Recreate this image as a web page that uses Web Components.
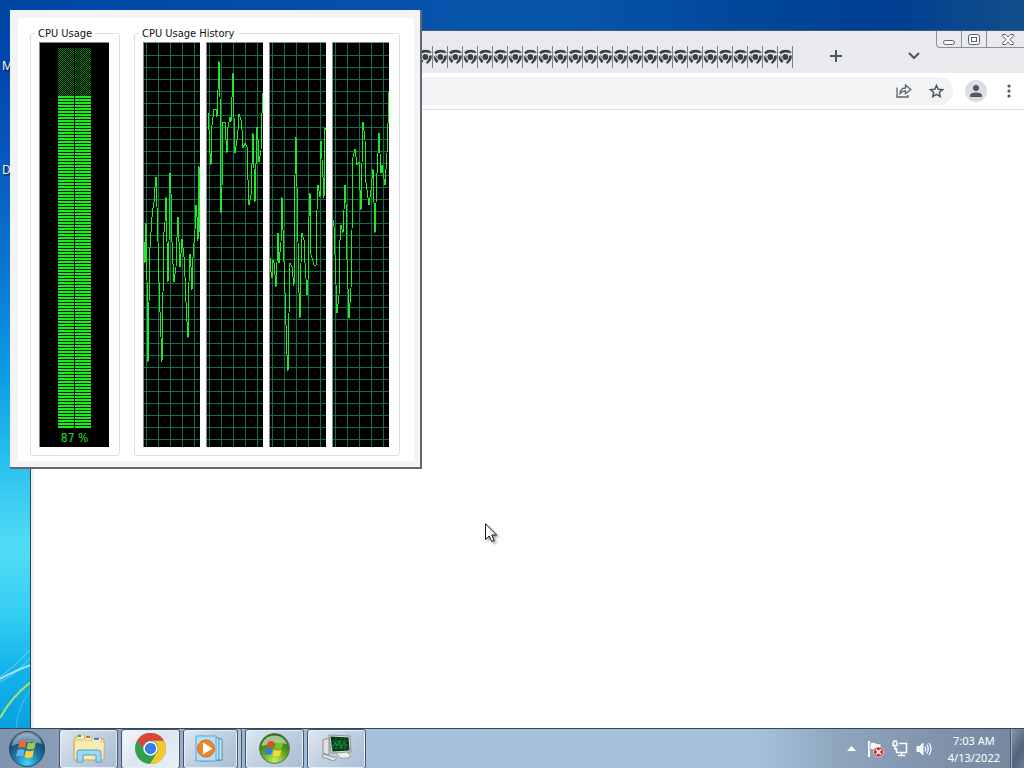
<!DOCTYPE html>
<html lang="en">
<head>
<meta charset="utf-8">
<title>Desktop</title>
<style>
html,body{margin:0;height:100%}
body{font-family:"Noto Sans","Open Sans",sans-serif;overflow:hidden}
</style>
</head>
<body>
<win-desktop>
  <browser-window></browser-window>
  <cpu-monitor></cpu-monitor>
  <win-taskbar slot="bar"></win-taskbar>
</win-desktop>
<script>
function define(name, html, setup) {
  customElements.define(name, class extends HTMLElement {
    constructor() {
      super();
      this.attachShadow({mode: "open"}).innerHTML = html;
      if (setup) setup.call(this, this.shadowRoot);
    }
  });
}

/* Scrolling graph of one processor core */
const HISTORY = [
  "1,200 2,221 3,181 4,238 5,320 6,260 7,205 9,175 10,166 11,160 12,145 13,135 14,165 15,200 16,240 17,270 19,320 20,250 21,190 22,180 23,155 24,200 25,240 26,200 27,131 28,151 29,200 30,222 31,240 33,225 34,195 35,175 36,200 37,225 39,197 41,215 42,235 43,260 44,280 45,296 46,240 47,212 48,225 49,248 50,215 52,188 53,163 54,175 55,199 56,124 57,190",
  "2,71 3,88 4,111 5,123 6,83 7,75 8,67 10,67 11,75 12,48 13,19 14,55 15,171 16,145 17,80 19,80 20,98 21,111 22,85 24,75 25,80 27,31 28,75 29,111 31,98 32,88 33,72 35,78 36,88 37,106 39,101 41,105 42,138 43,163 45,153 47,91 49,160 51,85 52,98 53,120 55,108 56,71 57,51",
  "1,216 2,230 3,236 4,218 5,221 7,245 8,220 9,191 10,221 12,200 13,155 14,188 16,251 18,313 19,329 20,271 21,221 23,225 25,244 26,133 27,95 28,145 29,200 30,251 31,276 32,221 33,191 35,198 36,221 38,253 39,238 40,175 41,151 42,213 44,219 45,223 47,224 48,168 49,143 51,155 52,99 54,135 55,156 56,86 57,88",
  "1,178 2,185 3,213 5,271 7,253 8,198 9,183 11,191 12,168 13,143 14,161 15,218 17,276 19,246 20,188 21,115 23,107 25,123 27,120 28,148 29,168 30,121 31,80 33,98 34,141 37,163 39,148 41,127 42,161 43,191 45,131 47,91 49,131 50,123 51,131 53,143 55,111 56,81 56,50 57,50"
];

define("cpu-graph", `<style>
:host{display:block;width:57px;height:405px;background:#000;overflow:hidden}
svg{display:block;width:100%;height:100%}
</style>
<svg viewBox="0 0 57 405" shape-rendering="crispEdges" fill="none">
<path class="grid" stroke="#117048"/>
<polyline stroke="#1eea26" stroke-width="1"/>
<path d="M.5 405V.5H57" stroke="#878787"/>
</svg>`, function (root) {
  let d = "";
  for (let x = 3; x < 57; x += 12) d += `M${x + .5} 1V405`;
  for (let y = 13; y < 405; y += 12) d += `M1 ${y + .5}H57`;
  root.querySelector(".grid").setAttribute("d", d);
  this.plot = points => root.querySelector("polyline").setAttribute("points", points);
});

define("cpu-meter", `<style>
:host{display:flex;flex-direction:column;align-items:center;box-sizing:border-box;width:70px;height:405px;
  background:#000;border-top:1px solid #878787;border-left:1px solid #878787;padding-top:5px}
.bars{display:grid;grid-template-columns:16px 16px;column-gap:1px;grid-template-rows:48px 332px}
.off{background:conic-gradient(#000 25%,#08780f 0 50%,#000 0 75%,#08780f 0) 0 0/2px 2px}
.on{background:repeating-linear-gradient(#18f01c 0 2px,#021a02 2px 3px)}
output{font:12px/16px "DejaVu Sans Condensed","DejaVu Sans",sans-serif;color:#1fe022;margin-top:2px}
</style>
<div class="bars"><i class="off"></i><i class="off"></i><i class="on"></i><i class="on"></i></div>
<output>87 %</output>`);

define("group-box", `<style>
:host{display:block}
fieldset{box-sizing:border-box;margin:0;min-width:0;border:1px solid #dcdfe2;border-radius:3px;padding:1px 10px 8px 8px}
legend{font:11px/15px "DejaVu Sans Condensed","DejaVu Sans",sans-serif;color:#111;padding:0 3px;margin-left:-4px}
.content{display:flex;gap:6px}
</style>
<fieldset><legend><slot name="title"></slot></legend><div class="content"><slot></slot></div></fieldset>`);

define("cpu-monitor", `<style>
:host{display:block;position:absolute;left:10px;top:10px;box-sizing:border-box;background:#f3f4f7;padding:8px 6px 6px 8px;
 border:solid #66686e;border-width:0 2px 2px 0}
.panel{display:flex;gap:14px;background:#fff;padding:8px 14px 5px 12px;border-radius:2px}
</style>
<div class="panel">
<group-box><span slot="title">CPU Usage</span><cpu-meter></cpu-meter></group-box>
<group-box class="history"><span slot="title">CPU Usage History</span></group-box>
</div>`, function (root) {
  const box = root.querySelector(".history");
  for (const points of HISTORY) {
    const graph = document.createElement("cpu-graph");
    graph.plot(points);
    box.append(graph);
  }
});

define("browser-tab", `<style>
:host{display:block;flex:none;width:15px}
button{display:block;width:15px;height:22px;border:0;border-right:1px solid #7d8288;padding:0;background:none}
svg{display:block;width:14px;height:16px}
</style>
<button aria-label="Tab"><svg viewBox="0 0 14 16" fill="none">
<circle cx="7.300" cy="8" r="2.900" fill="#3c4045"/>
<g stroke="#3c4045" stroke-width="2.700"><path d="M2 4.300Q4.200 2.200 7.500 2.200Q10.800 2.200 12.800 4.200"/><path d="M2.200 6.500Q1.600 10.500 4.700 13"/><path d="M12.300 6.500Q13.200 10.800 8.300 13.800"/></g>
<path d="M7 4.300H13.500M3.800 9.500L1 6M9.500 10.800L6.500 15" stroke="#e8eaed" stroke-width="1"/></svg></button>`);

define("browser-window", `<style>
:host{display:flex;flex-direction:column;position:absolute;inset:30px 0 0 30px;box-sizing:border-box;background:#fff;
 border-top:1px solid #405a78;border-left:1px solid #25455f}
.tabs{display:flex;align-items:center;height:42px;background:#e8eaed;position:relative}
.list{display:flex;margin:9px 23px 0 12px}
button{display:grid;place-items:center;border:0;padding:0;background:none;color:#50555a}
svg{display:block}
.new,.more{width:40px;height:28px;margin-top:8px}
.more{margin-left:auto;margin-right:90px}
.caption{position:absolute;top:0;right:0;display:flex;box-sizing:border-box;height:17px;border:1px solid #8c9095;border-width:0 0 1px 1px;border-radius:0 0 0 4px}
.caption button{width:25px;height:16px;border-right:1px solid #8c9095}
.caption button:last-child{width:37px;border:0;padding-left:4px}
.bar{display:flex;align-items:center;height:36px;border-bottom:1px solid #dcdee1;padding-right:2px}
.omni{flex:1;display:flex;align-items:center;height:28px;background:#f1f3f4;border-radius:14px;margin-left:112px;padding-right:1px}
input{flex:1;min-width:0;border:0;outline:0;background:none;font:13px "Noto Sans",sans-serif}
.omni button{width:32px;height:28px}
.user{width:22px;height:22px;border-radius:50%;background:#dadde4;margin:0 8px 0 12px}
.menu{width:27px;height:28px}
main{flex:1;background:#fff;border-left:3px solid #eef0f2}
</style>
<div class="tabs"><div class="list"></div>
<button class="new" aria-label="New tab"><svg width="12" height="12"><path d="M6 0V12M0 6H12" stroke="currentColor" stroke-width="2"/></svg></button>
<button class="more" aria-label="Search tabs"><svg width="12" height="8" fill="none"><path d="M1 1L6 6L11 1" stroke="currentColor" stroke-width="2"/></svg></button>
<div class="caption">
<button aria-label="Minimize"><svg width="13" height="12" fill="#fff" stroke="#5d6267"><rect x=".5" y="7.500" width="11" height="4" rx="2"/></svg></button>
<button aria-label="Restore"><svg width="12" height="11" fill="#fff" stroke="#5d6267"><rect x=".5" y=".5" width="11" height="10" rx="2"/><rect x="3.500" y="3.500" width="5" height="4"/></svg></button>
<button aria-label="Close"><svg width="12" height="11" fill="#fff" stroke="#5d6267"><path d="M.7 .5H3.800L6 3L8.200 .5H11.300V2L8 5.500L11.300 9V10.500H8.200L6 8L3.800 10.500H.7V9L4 5.500L.7 2Z"/></svg></button>
</div></div>
<div class="bar"><div class="omni"><input aria-label="Address">
<button aria-label="Share"><svg width="16" height="14" fill="none" stroke="#5f6368" stroke-width="1.300"><path d="M1 3.500V13H12V11M4 9.500Q4.500 4.200 9.500 4V1L14.800 5.500L9.500 9.700V7Q6 7 4 9.500Z"/></svg></button>
<button aria-label="Bookmark"><svg width="15" height="14" fill="none" stroke="#50555a" stroke-width="1.500"><path d="M7.500 1.500L9.200 5.300L13.500 5.700L10.300 8.500L11.200 12.600L7.500 10.400L3.800 12.600L4.700 8.500L1.500 5.700L5.800 5.300Z"/></svg></button></div>
<button class="user" aria-label="Profile"><svg width="12" height="12" fill="#50555f"><circle cx="6" cy="3" r="3"/><path d="M0 12V10Q1 7.500 6 7.500T12 10V12Z"/></svg></button>
<button class="menu" aria-label="Menu"><svg width="4" height="14" fill="#50555a"><circle cx="2" cy="2" r="1.600"/><circle cx="2" cy="7" r="1.600"/><circle cx="2" cy="12" r="1.600"/></svg></button></div>
<main></main>`, function (root) {
  const list = root.querySelector(".list");
  for (let i = 0; i < 50; i++) list.append(document.createElement("browser-tab"));
});

define("task-button", `<style>
:host{display:block;width:59px;height:40px}
button{display:grid;place-items:center;box-sizing:border-box;width:100%;height:100%;padding:0 0 2px;border:1px solid #42566e;border-radius:3px;
 background:linear-gradient(135deg,#dfe8f2,#c2d0e2 45%,#a9bdd6);box-shadow:inset 0 0 0 1px #e6eef7}
:host([active]) button{background:linear-gradient(135deg,#f5f8fc,#dbe4ef 50%,#eef2f7)}
:host([stacked]) button{width:55px;padding-right:4px;box-shadow:inset 0 0 0 1px #e6eef7,3px 0 0 #b4c5da,4px 0 0 #42566e}
</style><button><slot></slot></button>`, function (root) {
  root.querySelector("button").setAttribute("aria-label", this.getAttribute("label") || "Program");
});

define("win-taskbar", `<style>
:host{display:flex;align-items:stretch;box-sizing:border-box;height:40px;border-top:1px solid #31465c;
 background:linear-gradient(90deg,#8194ae 0,#8c9fb9 6%,#a7c1dc 36%,#a6c0da 74%,#8fa5be 82%,#7f92aa 92%,#7588a0)}
svg{display:block}
.start{border:0;background:none;padding:0 0 0 8px;margin-right:13px;display:grid;place-items:center}
.apps{display:flex;gap:3px}
.tray{display:flex;align-items:center;gap:8px;margin-left:auto}
.tray button{border:0;background:none;padding:0}
.tray .more{margin-right:3px}
time{display:block;font-size:11px;line-height:17px;color:#fff;text-align:center;margin:0 2px 0 8px}
.peek{align-self:stretch;width:14px;border-left:1px solid #44566b!important;box-shadow:inset 1px 0 #a7b5c6;
 background:linear-gradient(120deg,#8998ab,#52647a 60%,#6c7c92)!important}
</style>
<button class="start" aria-label="Start"><svg width="38" height="38" viewBox="0 0 38 38">
<defs><radialGradient id="o" cx=".5" cy=".9" r=".9"><stop stop-color="#43d8f5"/><stop offset=".4" stop-color="#1a7cac"/><stop offset=".75" stop-color="#1d4a72"/><stop offset="1" stop-color="#89a9c4"/></radialGradient></defs>
<circle cx="19" cy="19" r="17.500" fill="url(#o)" stroke="#26455f"/><path d="M4 14A16 16 0 0 1 34 14Q19 9 4 16Z" fill="#c8dbe8" opacity=".5"/>
<path d="M11.500 12Q15 9.500 18.500 11.500L17 18Q13.500 16.500 10 18.500Z" fill="#ec6a35"/><path d="M20 12Q24 14 28 11.500L26.500 18.500Q22 20.500 18.500 18.500Z" fill="#9cc94b"/>
<path d="M9.500 20Q13 18.500 16.500 20L15 26.500Q11.500 25 8 27Z" fill="#62b5ea"/><path d="M18 20.500Q22 22.300 26 20L24.500 27Q20 29 16.500 27Z" fill="#ffd03c"/></svg></button>
<div class="apps">
<task-button label="File Explorer"><svg width="34" height="30" viewBox="0 0 34 30">
<path d="M3 4H15L17 6H32V27H2V6Z" fill="#f3df92" stroke="#c6ab58"/><path d="M5 2H12V6H5ZM13 3H19V7H13ZM20 5H29V9H20Z" fill="#fff9dc" stroke="#c7b577" stroke-width=".6"/><path d="M6 2h3v2H6z" fill="#2ca43b"/><path d="M14 3h4v2h-4z" fill="#d46a30"/><path d="M22 5h5v2h-5z" fill="#4b7fd0"/>
<path d="M3 9Q18 7 32 10L31 26H3Z" fill="#faebb0"/><path d="M5 29V19Q5 17 8 17H26Q29 17 29 19V29H24V22H11V29Z" fill="#9ed9f4" stroke="#4b9fce"/></svg></task-button>
<task-button active label="Chrome"><svg width="31" height="31" viewBox="0 0 30 30">
<circle cx="15" cy="15" r="15" fill="#2fa14e"/><path d="M2 7.500A15 15 0 0 1 28 7.500H15A7.500 7.500 0 0 0 8.500 11.300L7 14Z" fill="#db4437"/><path d="M28 7.500A15 15 0 0 1 14.500 30L21.500 18.700A7.500 7.500 0 0 0 15 7.500Z" fill="#fbc62d"/><circle cx="15" cy="15" r="7" fill="#fff"/><circle cx="15" cy="15" r="5.500" fill="#3d7be8"/></svg></task-button>
<task-button stacked label="Media Player"><svg width="28" height="27" viewBox="0 0 28 27">
<path d="M7 2L27 4V25L7 26Z" fill="#d4ecf8" stroke="#3f89b8"/><path d="M5 1L24 3V25L5 26Z" fill="#bfe2f4" stroke="#3f89b8"/><path d="M1 1H21V26H1Z" fill="#b4def5" stroke="#5da5cd"/><circle cx="11" cy="13.500" r="8.500" fill="#ef842d" stroke="#d8671b"/><path d="M8 7.500L17.500 13.500L8 19.500Z" fill="#fff"/></svg></task-button>
<task-button label="Windows Media Center"><svg width="31" height="31" viewBox="0 0 31 31">
<defs><radialGradient id="g" cx=".5" cy=".9" r=".9"><stop stop-color="#c4ee60"/><stop offset=".5" stop-color="#579d25"/><stop offset="1" stop-color="#276421"/></radialGradient></defs>
<circle cx="15.500" cy="15.500" r="15" fill="url(#g)" stroke="#52812f"/><path d="M3 11A13.500 13.500 0 0 1 28 11Q16 8 3 13Z" fill="#eef7df" opacity=".6"/>
<path d="M9 9Q12 7 15.500 9L14 14.500Q11 13 7.500 14.500Z" fill="#e84b2c"/><path d="M17 9.500Q21 11 24.500 9L23 15Q19 17 15.500 15Z" fill="#79c12b"/>
<path d="M7 16Q10.500 14.500 13.500 16L12 22Q9 20.500 5.500 22Z" fill="#2f7fda"/><path d="M15 16.500Q19 18.500 22.500 16.500L21 22.500Q17 24.500 13.500 22.500Z" fill="#ffd530"/></svg></task-button>
<task-button label="Task Manager"><svg width="31" height="28" viewBox="0 0 31 28">
<path d="M2 6L8 4V21L2 19Z" fill="#e0e2df" stroke="#8c918c"/><path d="M8 1L29 2L30 18L10 19Z" fill="#d8dcd6" stroke="#8e958e"/><path d="M9.500 2.500L27.500 3.500L28.500 16.500L11.500 17.500Z" fill="#0a3419"/><path d="M11 7H27M11 11H27M12 14H27M15 4V16M20 4V16M24 4V16" stroke="#0d7d34" stroke-width=".8"/><path d="M12 13L14 8L16 12L18 7L20 14L23 8L26 12" fill="none" stroke="#1f9a3c" stroke-width=".9"/>
<path d="M15 19L26 18L30 22Q27 25 19 24Z" fill="#ececea" stroke="#979c97"/><path d="M2 20L16 24L13 27L1 23Z" fill="#dfe1de" stroke="#929892"/></svg></task-button>
</div>
<div class="tray">
<button class="more" aria-label="Show hidden icons"><svg width="9" height="5"><path d="M4.500 0L9 5H0Z" fill="#fff"/></svg></button>
<button aria-label="Action Center"><svg width="17" height="18" viewBox="0 0 17 18" fill="none"><path d="M2 1V17" stroke="#fff" stroke-width="2"/><path d="M3 3Q6 1 9 3T14 3V10Q11 11 8 10T3 10Z" fill="#f7f9fb" stroke="#5c6b7d" stroke-width=".6"/><circle cx="11.500" cy="12" r="5" fill="#d62f2c" stroke="#fff" stroke-width=".6"/><path d="M9 9.500L14 14.500M14 9.500L9 14.500" stroke="#fff" stroke-width="1.700"/></svg></button>
<button aria-label="Network"><svg width="16" height="17" viewBox="0 0 16 17" fill="none" stroke="#fff" stroke-width="1.500"><path d="M7 3.500H14.500V12.500H4.500V8M9.500 13V15.500M6 15.500H13"/><path d="M1 2V5.500H5V2M3 5.500V10M2 0V2.500M4 0V2.500"/></svg></button>
<button aria-label="Volume"><svg width="16" height="16" viewBox="0 0 16 16" fill="none" stroke="#fff"><path d="M1 5.500H3.500L7 2V14L3.500 10.500H1Z" fill="#f4f7fa"/><path d="M9 5.500Q10.500 8 9 10.500M11 3.500Q13.500 8 11 12.500M13 2Q17 8 13 14" stroke-width="1.200"/></svg></button>
<time>7:03 AM<br>4/13/2022</time>
<button class="peek" aria-label="Show desktop"></button>
</div>`);

define("win-desktop", `<style>
:host{display:grid;grid-template-rows:1fr auto;height:100vh;overflow:hidden}
.space{position:relative;min-height:0;overflow:hidden;background:linear-gradient(#0044a4 0,#0048b0 10%,#0759bf 22%,#0a79d3 38%,#0c9ee5 52%,#28c0ee 63%,#52dcf5 75%,#35cff4 84%,#14b3ea 92%,#09a0df)}
.glow{position:absolute;inset:0 0 auto 0;height:31px;background:linear-gradient(90deg,#0044a4,#0754ab 45%,#0754ab 57%,#00479a 73%,#003f91 87%,#124f8a)}
.rays{position:absolute;left:0;bottom:0}
.label{position:absolute;left:2px;font-size:12px;line-height:16px;color:#fff;text-shadow:1px 1px 2px #000}
.computer{top:58px}.documents{top:162px}
.pointer{position:absolute;left:485px;top:523px;filter:drop-shadow(2px 2px 1px #0005)}
</style>
<div class="space"><div class="glow"></div>
<svg class="rays" width="31" height="90" fill="none"><path d="M0 41Q14 33 31 27" stroke="#c4f2fb" stroke-width="2" opacity=".8"/><path d="M0 39Q17 27 31 11M0 44Q18 35 31 19" stroke="#a4eafa" opacity=".6"/><path d="M0 80Q12 58 31 44" stroke="#a4e76c" stroke-width="2"/><path d="M16 90Q18 68 31 51" stroke="#66d9ef" opacity=".6"/></svg>
<span class="label computer">M</span><span class="label documents">D</span>
<slot></slot>
<svg class="pointer" width="13" height="20" viewBox="0 0 13 20"><path d="M.5 .8V16.500L4.200 13L6.800 18.500L9.200 17.500L6.800 12H11.700Z" fill="#fff" stroke="#111"/></svg>
</div>
<slot name="bar"></slot>`);
</script>
</body>
</html>
